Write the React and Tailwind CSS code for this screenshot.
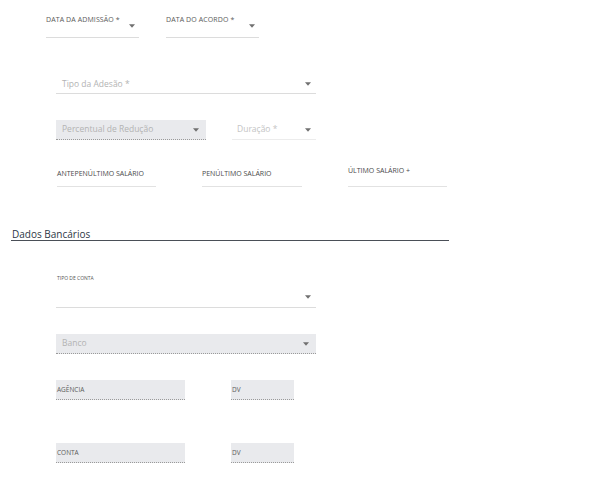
import React from 'react';

const Caret = () => (
    <svg width="6" height="4" viewBox="0 0 6 4" className="shrink-0">
        <path d="M0 0.3 L6 0.3 L3 3.7 Z" fill="#707070" />
    </svg>
);

const SelectLine = ({ label, width }) => (
    <div className={`${width} h-[24px] border-b border-[#dcdcdc] flex justify-between pr-[4px]`}>
        <span className="text-[7px] leading-[12px] text-[#5a5a5a] uppercase tracking-[0.1px]">{label}</span>
        <span className="self-end mb-[9px]"><Caret /></span>
    </div>
);

const TextLine = ({ label, width, raised }) => (
    <div className={`${width} h-[21px] border-b border-[#e2e2e2] flex items-start ${raised ? 'pt-0' : 'pt-[3px]'}`}>
        <span className="text-[7px] leading-[10px] text-[#4a4a4a] uppercase">{label}</span>
    </div>
);

const GrayBox = ({ label, width, caret, placeholder }) => (
    <div className={`${width} h-[20px] bg-[#e9eaed] border-b border-dotted border-[#9a9a9a] flex items-center justify-between ${placeholder ? 'pl-[6px]' : 'pl-[1px]'} pr-[7px]`}>
        <span className={placeholder ? 'text-[8.5px] text-[#b3b3b3]' : 'text-[6.5px] text-[#5a5a5a] uppercase'}>{label}</span>
        {caret && <Caret />}
    </div>
);

const App = () => {
    return (
        <div className="w-[603px] h-[500px] bg-white overflow-hidden" style={{ fontFamily: '"Open Sans", "Noto Sans", sans-serif' }}>
            {/* datas */}
            <div className="pt-[14px] pl-[46px] flex gap-[27px]">
                <SelectLine label="Data da admissão *" width="w-[93px]" />
                <SelectLine label="Data do acordo *" width="w-[93px]" />
            </div>

            {/* tipo da adesao */}
            <div className="mt-[37px] ml-[56px] w-[260px] h-[19px] border-b border-[#dcdcdc] flex items-center justify-between pl-[6px] pr-[5px]">
                <span className="text-[8.5px] text-[#b3b3b3]">Tipo da Adesão *</span>
                <Caret />
            </div>

            {/* percentual + duracao */}
            <div className="mt-[26px] ml-[56px] flex gap-[26px]">
                <GrayBox label="Percentual de Redução" width="w-[150px]" caret placeholder />
                <div className="w-[84px] h-[20px] border-b border-[#ececec] flex items-center justify-between pl-[5px] pr-[5px]">
                    <span className="text-[8.5px] text-[#c4c4c4]">Duração *</span>
                    <Caret />
                </div>
            </div>

            {/* salarios */}
            <div className="mt-[26px] ml-[57px] flex gap-[46px]">
                <TextLine label="Antepenúltimo salário" width="w-[99px]" />
                <TextLine label="Penúltimo salário" width="w-[100px]" />
                <TextLine label="Último salário +" width="w-[99px]" raised />
            </div>

            {/* dados bancarios */}
            <div className="mt-[41px] ml-[11px] w-[438px] h-[13px] border-b border-[#4a4f57] flex items-end">
                <h2 className="pl-[1px] text-[10px] leading-[12px] font-medium text-[#2e3746]">Dados Bancários</h2>
            </div>

            <div className="mt-[33px] ml-[56px] w-[260px] h-[34px] border-b border-[#dcdcdc] flex justify-between pl-[1px] pr-[5px]">
                <span className="text-[5px] leading-[8px] text-[#555] uppercase">Tipo de conta</span>
                <span className="self-end mb-[8px]"><Caret /></span>
            </div>

            <div className="mt-[26px] ml-[56px]">
                <GrayBox label="Banco" width="w-[260px]" caret placeholder />
            </div>

            <div className="mt-[26px] ml-[56px] flex gap-[46px]">
                <GrayBox label="Agência" width="w-[129px]" />
                <GrayBox label="DV" width="w-[63px]" />
            </div>

            <div className="mt-[43px] ml-[56px] flex gap-[46px]">
                <GrayBox label="Conta" width="w-[129px]" />
                <GrayBox label="DV" width="w-[63px]" />
            </div>
        </div>
    );
};

export default App;
